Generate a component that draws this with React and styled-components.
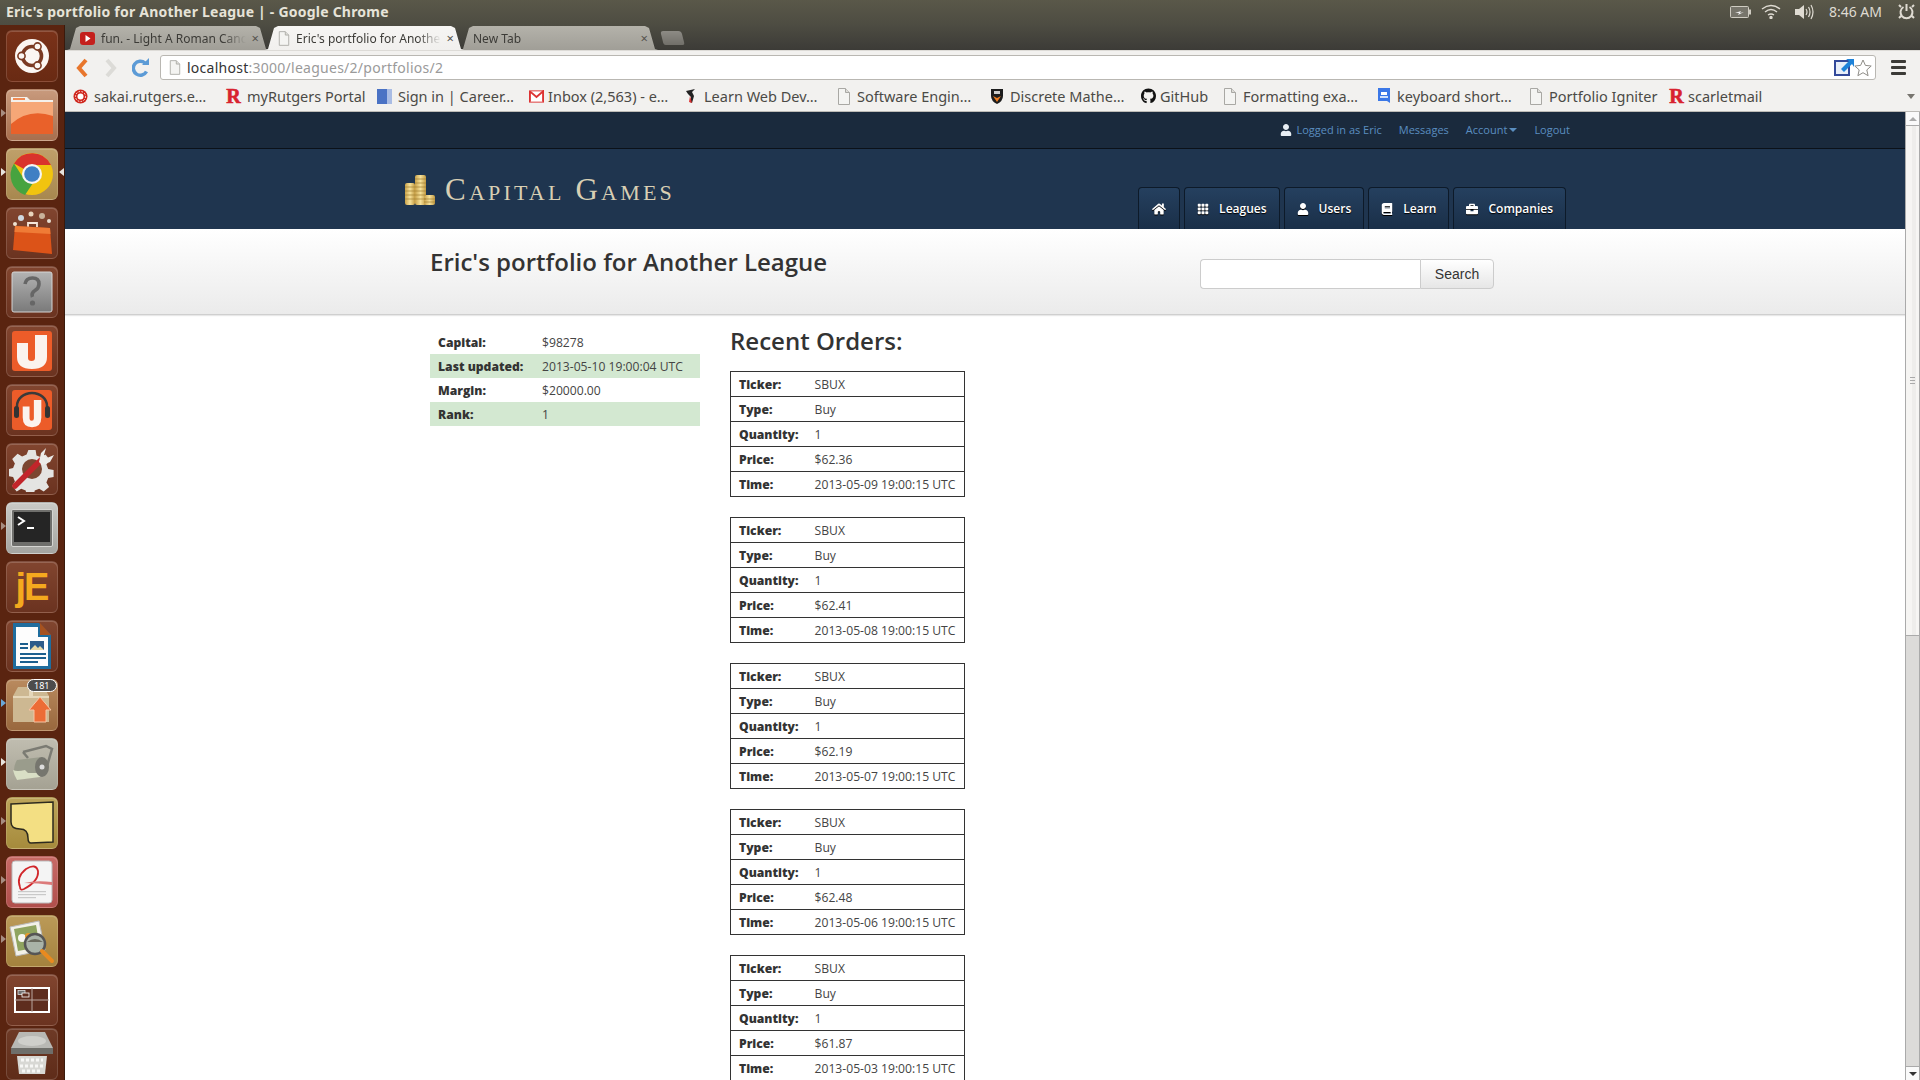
import styled, { createGlobalStyle } from "styled-components";
import { FaHome, FaUser, FaBook, FaBriefcase, FaGithub } from "react-icons/fa";
import { BsGrid3X3GapFill } from "react-icons/bs";

const Global = createGlobalStyle`
  html, body { margin: 0; padding: 0; height: 100%; overflow: hidden; background: #fff; }
  * { box-sizing: border-box; }
  body { font-family: "Open Sans", "Liberation Sans", sans-serif; color: #333; }
`;

const uiFont = `"Noto Sans", "Open Sans", sans-serif`;

const Screen = styled.div`
  width: 1920px;
  height: 1080px;
  display: flex;
  flex-direction: column;
  overflow: hidden;
  background: #3c3b37;
`;

const Panel = styled.div`
  height: 25px;
  flex: none;
  display: flex;
  align-items: center;
  justify-content: space-between;
  padding: 0 5px 2px 6px;
  background: linear-gradient(#5a5849, #4d4c42);
`;

const WindowTitle = styled.div`
  font: 700 14px ${uiFont};
  color: #e6e3d8;
  letter-spacing: 0.22px;
`;

const Tray = styled.div`
  display: flex;
  align-items: center;
  color: #dfdbd2;
`;

const TrayIcon = styled.svg`
  display: block;
  margin-right: ${(p) => p.$mr}px;
`;

const Clock = styled.span`
  font: 400 14px ${uiFont};
  color: #dfdbd2;
  margin-right: 16px;
`;

const Body = styled.div`
  flex: 1;
  display: flex;
  min-height: 0;
`;

const Launcher = styled.div`
  width: 65px;
  flex: none;
  display: flex;
  flex-direction: column;
  align-items: center;
  gap: 7px;
  padding: 5px 1px 0 0;
  background: #5a2410;
  border-right: 1px solid #3a1a0c;
  overflow: hidden;
`;

const Tile = styled.div`
  position: relative;
  width: 52px;
  height: 52px;
  flex: none;
  margin-top: ${(p) => (p.$fold ? "-5px" : 0)};
  border-radius: 6px;
  display: flex;
  align-items: center;
  justify-content: center;
  background: ${(p) => p.$bg || "linear-gradient(#81452f, #6b3320)"};
  border: 1px solid rgba(255, 255, 255, 0.14);
  box-shadow: inset 0 1px 0 rgba(255, 255, 255, 0.18);
`;

const Pip = styled.span`
  position: absolute;
  top: 19px;
  ${(p) => (p.$right ? "right: -7px" : "left: -6px")};
  width: 0;
  height: 0;
  border-top: 4px solid transparent;
  border-bottom: 4px solid transparent;
  ${(p) =>
    p.$right ? "border-right: 5px solid #e8e4de" : `border-left: 5px solid ${p.$color || "#e8e4de"}`};
  opacity: ${(p) => (p.$dim ? 0.55 : 1)};
`;

const CountBadge = styled.span`
  position: absolute;
  top: -1px;
  right: 0;
  height: 13px;
  padding: 0 6px;
  border-radius: 7px;
  background: #4c4c4c;
  border: 1px solid #fff;
  color: #fff;
  font: 400 9px/11px ${uiFont};
`;

const JEdit = styled.span`
  font: 700 38px/1 "Liberation Sans", sans-serif;
  letter-spacing: -2px;
  color: #f4a91e;
`;

const Browser = styled.div`
  flex: 1;
  min-width: 0;
  display: flex;
  flex-direction: column;
`;

const TabStrip = styled.div`
  height: 25px;
  flex: none;
  display: flex;
  align-items: flex-end;
  padding-left: 2px;
  background: linear-gradient(#4d4c42, #3c3b37);
`;

const Tab = styled.div`
  width: ${(p) => p.$w}px;
  height: 24px;
  margin-right: -4px;
  flex: none;
  display: flex;
  align-items: center;
  padding: 0 6px 0 ${(p) => p.$pl}px;
  gap: 6px;
  position: relative;
  z-index: ${(p) => (p.$active ? 2 : 1)};
  clip-path: polygon(0 100%, 3px 96%, 9px 8%, 13px 0, calc(100% - 13px) 0, calc(100% - 9px) 8%, calc(100% - 3px) 96%, 100% 100%);
  background: ${(p) => (p.$active ? "linear-gradient(#f6f5f3, #f1f0ee)" : "linear-gradient(#b4b2aa, #a09e97)")};
`;

const TabText = styled.span`
  flex: 1;
  min-width: 0;
  overflow: hidden;
  white-space: nowrap;
  font: 400 12px ${uiFont};
  color: #3c3b37;
  -webkit-mask-image: linear-gradient(to right, #000 84%, transparent 100%);
  mask-image: linear-gradient(to right, #000 84%, transparent 100%);
`;

const TabClose = styled.span`
  font: 400 13px/1 ${uiFont};
  color: #55534e;
  margin-right: 4px;
`;

const NewTab = styled.div`
  width: 21px;
  height: 14px;
  margin: 0 0 5px 8px;
  flex: none;
  border-radius: 3px 3px 2px 2px;
  transform: skewX(14deg);
  background: linear-gradient(#8d8b85, #716f69);
`;

const Toolbar = styled.div`
  height: 30px;
  flex: none;
  display: flex;
  align-items: flex-start;
  padding: 4px 0 0 0;
  background: #f2f1ef;
  border-top: 1px solid #dddbd7;
`;

const NavGlyphs = styled.div`
  width: 95px;
  height: 25px;
  flex: none;
  display: flex;
  align-items: center;
  gap: 15px;
  padding-left: 11px;
`;

const AddressBar = styled.div`
  width: 1716px;
  height: 25px;
  flex: none;
  display: flex;
  align-items: center;
  padding: 0 3px 0 8px;
  background: #fff;
  border: 1px solid #b9b7b2;
  border-radius: 3px;
`;

const Url = styled.div`
  flex: 1;
  margin-left: 6px;
  font: 400 14px/20px ${uiFont};
  color: #9a9a9a;
  letter-spacing: 0.26px;
`;

const Host = styled.span`
  color: #333;
`;

const MenuBars = styled.div`
  margin: 5px 0 0 15px;
  width: 15px;
  display: flex;
  flex-direction: column;
  gap: 3px;
`;

const MenuBar = styled.span`
  height: 3px;
  border-radius: 1px;
  background: #3c3b37;
`;

const Bookmarks = styled.div`
  height: 32px;
  flex: none;
  display: flex;
  align-items: center;
  padding: 1px 0 0 8px;
  background: #f2f1ef;
  border-bottom: 1px solid #bdbbb7;
  position: relative;
`;

const Bookmark = styled.div`
  width: ${(p) => p.$w}px;
  flex: none;
  display: flex;
  align-items: center;
  gap: ${(p) => p.$gap ?? 6}px;
  font: 400 14.5px ${uiFont};
  color: #4b4a46;
  white-space: nowrap;
`;

const BookmarkIcon = styled.span`
  width: 15px;
  height: 16px;
  flex: none;
  display: flex;
  align-items: center;
  justify-content: center;
  color: #111;
`;

const RutgersR = styled.span`
  font: 700 20px/16px "Liberation Serif", serif;
  color: #d8232f;
  -webkit-text-stroke: 0.6px #d8232f;
`;

const ChevronDown = styled.span`
  position: absolute;
  right: 5px;
  top: 14px;
  border-left: 4px solid transparent;
  border-right: 4px solid transparent;
  border-top: 5px solid #77756f;
`;

const Viewport = styled.div`
  flex: 1;
  min-height: 0;
  display: flex;
`;

const Page = styled.div`
  flex: 1;
  min-width: 0;
  overflow: hidden;
  background: #fff;
`;

const Container = styled.div`
  width: 1170px;
  margin: 0 auto;
`;

const TopBar = styled.div`
  height: 37px;
  background: #1a2a3d;
  border-bottom: 1px solid #0b1119;
`;

const TopLinks = styled(Container)`
  height: 35px;
  display: flex;
  align-items: center;
  justify-content: flex-end;
  gap: 17px;
  font-size: 11px;
  color: #5a8ec0;
`;

const TopLink = styled.span`
  display: flex;
  align-items: center;
  gap: ${(p) => p.$gap ?? 0}px;
`;

const UserIcon = styled(FaUser)`
  color: #e8eef4;
  font-size: 12px;
`;

const Caret = styled.span`
  margin-left: 2px;
  border-left: 4px solid transparent;
  border-right: 4px solid transparent;
  border-top: 4px solid #5a8ec0;
`;

const Header = styled.div`
  height: 80px;
  background: #1f354f;
`;

const HeaderRow = styled(Container)`
  height: 80px;
  display: flex;
  justify-content: space-between;
  align-items: flex-end;
  padding: 0 4px 0 4px;
`;

const Logo = styled.div`
  align-self: flex-start;
  margin-top: 23px;
  display: flex;
  align-items: center;
  gap: 9px;
`;

const LogoText = styled.span`
  font: 400 31px/36px "Liberation Serif", serif;
  font-variant: small-caps;
  letter-spacing: 3.2px;
  color: #d8cfb4;
`;

const MainNav = styled.div`
  display: flex;
  gap: 4px;
`;

const NavButton = styled.div`
  height: 42px;
  padding: 0 ${(p) => p.$px ?? 12}px;
  display: flex;
  align-items: center;
  gap: 10px;
  color: #fff;
  font-size: 12px;
  font-weight: 600;
  text-shadow: 0 1px 1px #000;
  background: linear-gradient(#25405f, #1a2f48);
  border: 1px solid #0d1a29;
  border-bottom: none;
  border-radius: 4px 4px 0 0;
  svg {
    font-size: ${(p) => p.$icon ?? 12}px;
    filter: drop-shadow(0 1px 0 #000);
  }
`;

const SubHeader = styled.div`
  height: 86px;
  background: linear-gradient(#fff, #ebebeb);
  border-bottom: 1px solid #cfcfcf;
  box-shadow: 0 1px 1px #e8e8e8;
`;

const SubRow = styled(Container)`
  height: 85px;
  display: flex;
  justify-content: space-between;
  padding: 0 76px 0 30px;
`;

const Title = styled.h1`
  margin: 15px 0 0;
  font-size: 24px;
  line-height: 36px;
  font-weight: 600;
  color: #333;
`;

const SearchForm = styled.div`
  margin-top: 30px;
  height: 30px;
  display: flex;
`;

const SearchInput = styled.div`
  width: 220px;
  background: #fff;
  border: 1px solid #ccc;
  border-right: none;
  border-radius: 4px 0 0 4px;
`;

const SearchButton = styled.div`
  width: 74px;
  display: flex;
  align-items: center;
  justify-content: center;
  font: 400 14px "Liberation Sans", sans-serif;
  color: #333;
  background: linear-gradient(#fff, #e6e6e6);
  border: 1px solid #ccc;
  border-radius: 0 4px 4px 0;
`;

const Content = styled(Container)`
  display: grid;
  grid-template-columns: 270px 235px;
  column-gap: 30px;
  padding: 15px 0 0 30px;
`;

const StatsTable = styled.table`
  width: 270px;
  align-self: start;
  border-collapse: collapse;
  font-size: 12.15px;
`;

const StatsRow = styled.tr`
  height: 24px;
  background: ${(p) => (p.$striped ? "#d3e8d1" : "#fff")};
`;

const Label = styled.td`
  padding: 0 8px;
  font-weight: 800;
  color: #333;
  white-space: nowrap;
  width: ${(p) => p.$w}px;
`;

const Value = styled.td`
  padding: 0 8px;
  color: #444;
  white-space: nowrap;
`;

const OrdersTitle = styled.h2`
  margin: -2px 0 17px;
  font-size: 24px;
  line-height: 26px;
  font-weight: 600;
  color: #333;
`;

const OrderTable = styled.table`
  width: 235px;
  border-collapse: collapse;
  border: 1px solid #333;
  font-size: 12.15px;
  margin-bottom: 20px;
`;

const OrderRow = styled.tr`
  height: 25px;
  border-top: 1px solid #333;
`;

const Scrollbar = styled.div`
  width: 15px;
  flex: none;
  display: flex;
  flex-direction: column;
  border-left: 1px solid #aaa;
  border-right: 1px solid #aaa;
  background: #dcdbd9;
`;

const ScrollButton = styled.div`
  height: 14px;
  flex: none;
  display: flex;
  align-items: center;
  justify-content: center;
  background: #fafafa;
  border: solid #aaa;
  border-width: ${(p) => (p.$down ? "1px 0 0" : "0 0 1px")};
  margin-top: ${(p) => (p.$down ? "auto" : 0)};
`;

const ScrollArrow = styled.span`
  border-left: 4px solid transparent;
  border-right: 4px solid transparent;
  ${(p) => (p.$down ? "border-top: 4px solid #333" : "border-bottom: 4px solid #aaa")};
`;

const ScrollThumb = styled.div`
  height: 510px;
  flex: none;
  display: flex;
  align-items: center;
  justify-content: center;
  background: linear-gradient(to right, #f6f5f3 0 50%, #eeedeb 50% 80%, #f6f5f3 80%);
  border-bottom: 1px solid #aaa;
`;

const Grip = styled.span`
  width: 5px;
  height: 7px;
  border-top: 1px solid #aaa;
  border-bottom: 1px solid #aaa;
  background: linear-gradient(#aaa, #aaa) center / 100% 1px no-repeat;
`;

const PageDoc = ({ size = 14 }) => (
  <svg width={size} height={size + 3} viewBox="0 0 14 17">
    <path d="M1.5.5h7l4 4v12h-11z" fill="#f4f4f2" stroke="#a9a8a4" />
    <path d="M8.5.5v4h4" fill="#dddcd8" stroke="#a9a8a4" />
  </svg>
);

const StarOutline = () => (
  <svg width="18" height="18" viewBox="0 0 18 18">
    <path d="M9 1l2.400 5.400 5.800.6-4.400 3.900 1.300 5.800L9 13.700l-5.100 3 1.300-5.800L.8 7l5.800-.6z" fill="#fff" stroke="#8f8d88" />
  </svg>
);

// launcher artwork, drawn roughly at 44px
const UbuntuIcon = () => (
  <svg width="36" height="36" viewBox="0 0 36 36">
    <circle cx="18" cy="18" r="17" fill="#fbf6f2" />
    <circle cx="18" cy="18" r="9.5" fill="none" stroke="#7b3a22" strokeWidth="3.6" />
    <circle cx="7.5" cy="18" r="3.6" fill="#fbf6f2" stroke="#7b3a22" strokeWidth="1.6" />
    <circle cx="23.5" cy="8.5" r="3.6" fill="#fbf6f2" stroke="#7b3a22" strokeWidth="1.6" />
    <circle cx="23.5" cy="27.5" r="3.6" fill="#fbf6f2" stroke="#7b3a22" strokeWidth="1.6" />
  </svg>
);

const FolderIcon = () => (
  <svg width="46" height="42" viewBox="0 0 46 42">
    <path d="M2 3h16l3 3h23v8H2z" fill="#f4f1ec" />
    <path d="M4 4h12v2H4z" fill="#f08a54" />
    <path d="M2 8h42v32H2z" fill="#e9612a" />
    <path d="M2 8h42v14Q20 14 2 30z" fill="#f6a777" />
  </svg>
);

const ChromeIcon = () => (
  <svg width="44" height="44" viewBox="0 0 44 44">
    <circle cx="22" cy="22" r="21" fill="#f1c40f" />
    <path d="M4 11.500A21 21 0 0 1 41 13L22 13A9 9 0 0 0 14 17z" fill="#d9332c" />
    <path d="M4 11.500L14 27A9 9 0 0 0 23 31L15 43A21 21 0 0 1 4 11.500z" fill="#46a33f" />
    <circle cx="22" cy="22" r="10" fill="#f5f5f5" />
    <circle cx="22" cy="22" r="7.800" fill="#3f7fc4" />
  </svg>
);

const BagIcon = () => (
  <svg width="46" height="46" viewBox="0 0 46 46">
    <circle cx="12" cy="8" r="3" fill="#cfd8e0" />
    <circle cx="22" cy="4" r="2.500" fill="#e8d5bd" />
    <circle cx="33" cy="6" r="3" fill="#c9b29a" />
    <circle cx="40" cy="11" r="2" fill="#e7e0d4" />
    <circle cx="6" cy="14" r="2" fill="#f0e3d0" />
    <path d="M19 17v-4h9v4" fill="none" stroke="#f5e7da" strokeWidth="1.800" />
    <path d="M6 16L41 18L43 44L4 40z" fill="#dc5318" />
    <path d="M6 16L41 18L41.500 24L5.500 22z" fill="#ef7b36" />
  </svg>
);

const HelpIcon = () => (
  <svg width="42" height="42" viewBox="0 0 42 42">
    <defs>
      <linearGradient id="help" x1="0" y1="0" x2="0" y2="1">
        <stop offset="0" stopColor="#b3b3b3" />
        <stop offset="1" stopColor="#7a7a7a" />
      </linearGradient>
    </defs>
    <rect x="1" y="1" width="40" height="40" rx="2" fill="url(#help)" stroke="#d5d5d5" />
    <path d="M14 13q1-6 7.500-6T28 13q0 4-4 6.500T21.500 26" fill="none" stroke="#666" strokeWidth="3.600" />
    <circle cx="21.500" cy="32" r="2.600" fill="#666" />
  </svg>
);

const OneIcon = ({ phones }) => (
  <svg width="42" height="42" viewBox="0 0 42 42">
    <rect x="1" y="1" width="40" height="40" rx="3" fill="#ec5c29" />
    {phones && (
      <>
        <path d="M6 24V17a15 13 0 0 1 30 0v7" fill="none" stroke="#3a3a3a" strokeWidth="2.500" />
        <rect x="3" y="17" width="5" height="12" rx="2.500" fill="#333" />
        <rect x="34" y="17" width="5" height="12" rx="2.500" fill="#333" />
      </>
    )}
    <path
      d="M6 13h11v15q0 3 3.500 3t3.500-3V5h12v22q0 12-15 12T6 27z"
      fill="#fbf3ee"
      transform={phones ? "translate(8 7) scale(.62 .8)" : undefined}
    />
  </svg>
);

const GearIcon = () => (
  <svg width="46" height="46" viewBox="0 0 46 46">
    <path
      d="M19 2h8l1 6 5 2 5-3 5 6-4 5 2 5 6 1v8l-6 1-2 5 3 5-6 5-5-3-5 2-1 5h-8l-1-5-5-2-5 3-5-6 3-5-2-5-5-1v-8l5-1 2-5-3-5 6-6 5 3 5-2z"
      fill="#e4e4e2"
      transform="translate(2.300 2.300) scale(.9)"
    />
    <circle cx="23" cy="23" r="10" fill="#7c4630" />
    <path d="M6 40L32 14" stroke="#c2252a" strokeWidth="5.500" strokeLinecap="round" />
    <path d="M30 16l2-9 5-5-2 7 3 3 7-3-4 7-8 3z" fill="#ecece9" />
  </svg>
);

const TerminalIcon = () => (
  <svg width="44" height="38" viewBox="0 0 42 38">
    <rect x="0.500" y="0.500" width="41" height="37" rx="1.500" fill="#6f6f6c" stroke="#d5d5d2" />
    <rect x="3" y="3" width="36" height="30" fill="#252525" />
    <path d="M7 8l6 4-6 4" fill="none" stroke="#fff" strokeWidth="2" />
    <path d="M16 19h7" stroke="#fff" strokeWidth="2" />
  </svg>
);

const WriterIcon = () => (
  <svg width="40" height="48" viewBox="0 0 40 48">
    <path d="M1 1h26l12 12v34H1z" fill="#1f6d9e" />
    <path d="M28 1l11 12H28z" fill="#a6521f" />
    <path d="M4 5h22v10h10v29H4z" fill="#fdfdfd" />
    <rect x="18" y="19" width="14" height="9" fill="#2d5c8a" />
    <path d="M18 28l5-5 3 3 2-2 4 4z" fill="#e8d9a7" />
    <g fill="#1c5f8e">
      <rect x="8" y="21" width="8" height="2" />
      <rect x="8" y="25" width="8" height="2" />
      <rect x="8" y="31" width="26" height="2" />
      <rect x="8" y="35" width="26" height="2" />
      <rect x="8" y="39" width="18" height="2" />
    </g>
  </svg>
);

const PackageIcon = () => (
  <svg width="46" height="42" viewBox="0 0 46 42">
    <path d="M4 12l5-9h26l5 9v26H4z" fill="#cdb892" />
    <path d="M4 12h36v2H4z" fill="#e5d7ba" />
    <rect x="20" y="3" width="4" height="10" fill="#e5d7ba" />
    <path d="M25 38V26h-5l11-13 11 13h-5v12z" fill="#ec6c36" stroke="#f7c4a4" />
  </svg>
);

const RollerIcon = () => (
  <svg width="46" height="44" viewBox="0 0 46 44">
    <path d="M14 10L37 4l6 3-7 24" fill="none" stroke="#7b7b73" strokeWidth="2.500" />
    <path d="M19 16L14 10" stroke="#7b7b73" strokeWidth="2.500" />
    <path d="M8 18L33 15v19L8 38q-6-10 0-20z" fill="#9a9c8c" />
    <path d="M4 28q4 2 12 0l3 3h12v4L8 38q-3-5-4-10z" fill="#d9dfc5" />
    <ellipse cx="33" cy="25" rx="7" ry="10" fill="#76766e" />
    <circle cx="33" cy="25" r="2.500" fill="#ddd" />
  </svg>
);

const NoteIcon = () => (
  <svg width="46" height="44" viewBox="0 0 46 44">
    <path d="M2 3l42-2v40l-22 1q-3 0-3-5 0-9-8-9-9 0-9-7z" fill="#f3df83" stroke="#2d2a1e" strokeWidth="1.500" />
  </svg>
);

const EvinceIcon = () => (
  <svg width="42" height="44" viewBox="0 0 42 44">
    <rect x="1" y="1" width="40" height="42" rx="3" fill="#f4f4f4" stroke="#bbb" />
    <path d="M9 27q-4-10 6-18 10-6 12 2 1 10-14 18-4 2-4-2" fill="none" stroke="#d1262a" strokeWidth="1.800" />
    <path d="M13 23q12-3 28-1v3q-14-2-28-2z" fill="#dc7a7a" />
    <g fill="#c9c9c9">
      <rect x="7" y="31" width="28" height="1.200" />
      <rect x="7" y="34" width="28" height="1.200" />
      <rect x="7" y="37" width="18" height="1.200" />
    </g>
  </svg>
);

const ViewerIcon = () => (
  <svg width="48" height="46" viewBox="0 0 48 46">
    <path d="M2 9l29-6 6 29-29 6z" fill="#f2f1e8" stroke="#bbb" />
    <path d="M6 11l22-4 4 22-22 4z" fill="#8fa45f" />
    <circle cx="14" cy="20" r="4" fill="#f7f7f0" />
    <circle cx="20" cy="18" r="3" fill="#e89a2c" />
    <circle cx="27" cy="26" r="10" fill="#a9b3a8" stroke="#555" strokeWidth="2.500" />
    <path d="M19 24q8-6 16 0" fill="#6a6b5f" />
    <path d="M34 33l10 10" stroke="#e98a1f" strokeWidth="4" strokeLinecap="round" />
  </svg>
);

const WorkspacesIcon = () => (
  <svg width="36" height="26" viewBox="0 0 36 26">
    <rect x="1" y="1" width="34" height="24" fill="#5e2d1e" stroke="#fff" strokeWidth="2" />
    <path d="M18 1v24M1 13h34" stroke="#b9a79f" strokeWidth="1" />
    <rect x="4" y="3.500" width="7" height="4" fill="#6f6f6f" stroke="#ddd" strokeWidth="0.800" />
    <rect x="8" y="6" width="7" height="4" fill="#5e2d1e" stroke="#fff" strokeWidth="0.800" />
  </svg>
);

const TrashIcon = () => (
  <svg width="50" height="50" viewBox="0 0 50 50">
    <path d="M12 3h26l8 16H4z" fill="#b8b8b4" />
    <ellipse cx="25" cy="12" rx="14" ry="5" fill="#cfcfcb" />
    <path d="M4 19h42v6H4z" fill="#6e6e6a" />
    <path d="M10 27h30l-2 18H12z" fill="#d8d8d4" />
    <path d="M14 31h22M13 37h24M15 42h20" stroke="#f7f7f5" strokeWidth="3" strokeDasharray="3 2" />
  </svg>
);

const launcherItems = [
  { key: "ubuntu", icon: <UbuntuIcon />, bg: "linear-gradient(#7a3219, #692a13)" },
  { key: "files", icon: <FolderIcon />, bg: "linear-gradient(#c89a7d, #a86f4e)", pip: "hollow" },
  { key: "chrome", icon: <ChromeIcon />, bg: "linear-gradient(#bfa06a, #a8884f)", pip: "both" },
  { key: "store", icon: <BagIcon /> },
  { key: "help", icon: <HelpIcon /> },
  { key: "one", icon: <OneIcon /> },
  { key: "music", icon: <OneIcon phones /> },
  { key: "settings", icon: <GearIcon /> },
  { key: "terminal", icon: <TerminalIcon />, bg: "linear-gradient(#c9c9c5, #a5a5a1)", pip: "hollow" },
  { key: "jedit", icon: <JEdit>jE</JEdit> },
  { key: "writer", icon: <WriterIcon /> },
  { key: "updates", icon: <PackageIcon />, bg: "linear-gradient(#b98a5e, #99683e)", pip: "blue", badge: "181" },
  { key: "roller", icon: <RollerIcon />, bg: "linear-gradient(#c0bdb0, #a5a293)", pip: "solid" },
  { key: "notes", icon: <NoteIcon />, bg: "linear-gradient(#bda55a, #a68b3c)", pip: "hollow" },
  { key: "evince", icon: <EvinceIcon />, bg: "linear-gradient(#c86a66, #b04f4c)", pip: "hollow" },
  { key: "viewer", icon: <ViewerIcon />, bg: "linear-gradient(#bb9a58, #a4823e)", pip: "hollow" },
  { key: "workspaces", icon: <WorkspacesIcon /> },
  { key: "trash", icon: <TrashIcon />, bg: "linear-gradient(#6e3a26, #5f2c19)", fold: true },
];

const bookmarks = [
  {
    w: 153,
    text: "sakai.rutgers.e…",
    icon: (
      <svg width="15" height="15" viewBox="0 0 15 15">
        <circle cx="7.500" cy="7.500" r="7" fill="#d0271d" />
        <circle cx="7.500" cy="7.500" r="3" fill="#fff" />
        <circle cx="7.500" cy="7.500" r="5" fill="none" stroke="#fff" strokeWidth="1" strokeDasharray="1.500 1.500" />
      </svg>
    ),
  },
  { w: 151, text: "myRutgers Portal", icon: <RutgersR>R</RutgersR> },
  {
    w: 152,
    text: "Sign in | Career…",
    icon: (
      <svg width="15" height="15" viewBox="0 0 15 15">
        <rect width="15" height="15" fill="#4a72c4" />
        <rect x="10" width="5" height="15" fill="#a9bce4" />
      </svg>
    ),
  },
  {
    w: 154,
    gap: 4,
    text: "Inbox (2,563) - e…",
    icon: (
      <svg width="16" height="13" viewBox="0 0 16 13">
        <rect x="0.500" y="0.500" width="15" height="12" fill="#fff" stroke="#d33" />
        <path d="M1 1l7 6 7-6v11M1 1v11" fill="none" stroke="#d33" strokeWidth="2" />
      </svg>
    ),
  },
  {
    w: 153,
    text: "Learn Web Dev…",
    icon: (
      <svg width="15" height="16" viewBox="0 0 15 16">
        <path d="M3 3l9-2-3 3 2 4-2 7-2-1 1-5-3-3z" fill="#222" />
        <path d="M7 8l2 7-3-1z" fill="#d33" />
      </svg>
    ),
  },
  { w: 153, text: "Software Engin…", icon: <PageDoc /> },
  {
    w: 152,
    text: "Discrete Mathe…",
    icon: (
      <svg width="14" height="16" viewBox="0 0 14 16">
        <path d="M1 1h12v7q0 5-6 8-6-3-6-8z" fill="#1d1d1d" />
        <path d="M3 8l4 2 4-2-4 6z" fill="#ef7d22" />
        <rect x="4" y="3" width="6" height="3" fill="#ccc" />
      </svg>
    ),
  },
  { w: 81, gap: 4, text: "GitHub", icon: <FaGithub size={16} /> },
  { w: 154, text: "Formatting exa…", icon: <PageDoc /> },
  {
    w: 152,
    text: "keyboard short…",
    icon: (
      <svg width="14" height="16" viewBox="0 0 14 16">
        <path d="M1 0h12v15l-3-2H1z" fill="#3b78e7" />
        <rect x="4" y="4" width="6" height="3" fill="#fff" />
        <rect x="3" y="8" width="8" height="2" fill="#cfe0fb" />
      </svg>
    ),
  },
  { w: 141, text: "Portfolio Igniter", icon: <PageDoc /> },
  { w: 130, gap: 4, text: "scarletmail", icon: <RutgersR>R</RutgersR> },
];

const orders = [
  { price: "$62.36", time: "2013-05-09 19:00:15 UTC" },
  { price: "$62.41", time: "2013-05-08 19:00:15 UTC" },
  { price: "$62.19", time: "2013-05-07 19:00:15 UTC" },
  { price: "$62.48", time: "2013-05-06 19:00:15 UTC" },
  { price: "$61.87", time: "2013-05-03 19:00:15 UTC" },
];

const stats = [
  ["Capital:", "$98278"],
  ["Last updated:", "2013-05-10 19:00:04 UTC"],
  ["Margin:", "$20000.00"],
  ["Rank:", "1"],
];

const CoinStack = () => (
  <svg width="32" height="32" viewBox="0 0 32 32">
    <defs>
      <linearGradient id="coin" x1="0" y1="0" x2="1" y2="0">
        <stop offset="0" stopColor="#c9a24a" />
        <stop offset="0.5" stopColor="#f6e19a" />
        <stop offset="1" stopColor="#c29a42" />
      </linearGradient>
    </defs>
    <rect x="1" y="9" width="10" height="22" rx="2" fill="url(#coin)" />
    <rect x="11" y="1" width="11" height="30" rx="2" fill="url(#coin)" />
    <rect x="20" y="21" width="11" height="10" rx="2" fill="url(#coin)" />
    <path d="M1 13h10M1 17h10M1 21h10M1 25h10M11 5h11M11 9h11M11 13h11M11 17h11M11 21h11M11 25h11M20 25h11M20 28h11" stroke="#a07f30" strokeWidth="0.700" />
  </svg>
);

export default function App() {
  return (
    <Screen>
      <Global />
      <Panel>
        <WindowTitle>Eric's portfolio for Another League | - Google Chrome</WindowTitle>
        <Tray>
          <TrayIcon $mr={10} width="21" height="12" viewBox="0 0 21 12">
            <rect x="0.500" y="0.500" width="18" height="11" rx="1" fill="#77756b" stroke="#cfccc2" />
            <rect x="19" y="3.500" width="2" height="5" fill="#cfccc2" />
            <path d="M5 7l6-2-1 2 4-1-6 3 1-2z" fill="#eee" />
          </TrayIcon>
          <TrayIcon $mr={13} width="20" height="15" viewBox="0 0 20 15" fill="none" stroke="#dfdbd2" strokeWidth="1.400">
            <path d="M1 5q9-7 18 0M4 8q6-5 12 0M7 11q3-2 6 0" />
            <circle cx="10" cy="13.500" r="1" fill="#dfdbd2" />
          </TrayIcon>
          <TrayIcon $mr={15} width="20" height="16" viewBox="0 0 20 16">
            <path d="M1 5h4l5-4v14l-5-4H1z" fill="#dfdbd2" />
            <path d="M12 5q2 3 0 6M14.500 3q3 5 0 10M17 1q4 7 0 14" fill="none" stroke="#dfdbd2" strokeWidth="1.200" />
          </TrayIcon>
          <Clock>8:46 AM</Clock>
          <TrayIcon $mr={0} width="17" height="17" viewBox="0 0 17 17" fill="none" stroke="#dfdbd2" strokeWidth="2">
            <path d="M5.500 4a6 6 0 1 0 6 0M8.500 1v7M1 2l2 2M16 2l-2 2M1 15l2-2M16 15l-2-2" />
          </TrayIcon>
        </Tray>
      </Panel>
      <Body>
        <Launcher>
          {launcherItems.map((item) => (
            <Tile key={item.key} $bg={item.bg} $fold={item.fold}>
              {item.icon}
              {item.pip === "hollow" && <Pip $dim />}
              {item.pip === "solid" && <Pip />}
              {item.pip === "blue" && <Pip $color="#6aa7d8" />}
              {item.pip === "both" && (
                <>
                  <Pip />
                  <Pip $right />
                </>
              )}
              {item.badge && <CountBadge>{item.badge}</CountBadge>}
            </Tile>
          ))}
        </Launcher>
        <Browser>
          <TabStrip>
            <Tab $w={202} $pl={13}>
              <svg width="15" height="13" viewBox="0 0 15 13">
                <rect width="15" height="13" rx="3" fill="#c4201d" />
                <path d="M5.500 3l5 3.500-5 3.500z" fill="#fff" />
              </svg>
              <TabText>fun. - Light A Roman Canc</TabText>
              <TabClose>×</TabClose>
            </Tab>
            <Tab $w={199} $pl={13} $active>
              <PageDoc size={12} />
              <TabText>Eric's portfolio for Anothe</TabText>
              <TabClose>×</TabClose>
            </Tab>
            <Tab $w={198} $pl={13}>
              <TabText>New Tab</TabText>
              <TabClose>×</TabClose>
            </Tab>
            <NewTab />
          </TabStrip>
          <Toolbar>
            <NavGlyphs>
              <svg width="13" height="20" viewBox="0 0 13 20">
                <path d="M10 2L3 10l7 8" fill="none" stroke="#e8762c" strokeWidth="4" />
              </svg>
              <svg width="13" height="20" viewBox="0 0 13 20">
                <path d="M3 2l7 8-7 8" fill="none" stroke="#dcdbd7" strokeWidth="4" />
              </svg>
              <svg width="18" height="20" viewBox="0 0 18 20">
                <path d="M14.500 13.500A7 7 0 1 1 13 5" fill="none" stroke="#5c9bd6" strokeWidth="3.500" />
                <path d="M10 7h7V0z" fill="#5c9bd6" />
              </svg>
            </NavGlyphs>
            <AddressBar>
              <PageDoc size={12} />
              <Url>
                <Host>localhost</Host>:3000/leagues/2/portfolios/2
              </Url>
              <svg width="20" height="20" viewBox="0 2 20 20">
                <rect x="1" y="5" width="14" height="14" fill="#e8eef8" stroke="#33499a" strokeWidth="2" />
                <path d="M7 13L15 5l-3-2h8v8l-2-3-8 8z" fill="#1e82d8" />
              </svg>
              <StarOutline />
            </AddressBar>
            <MenuBars>
              <MenuBar />
              <MenuBar />
              <MenuBar />
            </MenuBars>
          </Toolbar>
          <Bookmarks>
            {bookmarks.map((b) => (
              <Bookmark key={b.text} $w={b.w} $gap={b.gap}>
                <BookmarkIcon>{b.icon}</BookmarkIcon>
                {b.text}
              </Bookmark>
            ))}
            <ChevronDown />
          </Bookmarks>
          <Viewport>
            <Page>
              <TopBar>
                <TopLinks>
                  <TopLink $gap={4}>
                    <UserIcon />
                    Logged in as Eric
                  </TopLink>
                  <TopLink>Messages</TopLink>
                  <TopLink>
                    Account
                    <Caret />
                  </TopLink>
                  <TopLink>Logout</TopLink>
                </TopLinks>
              </TopBar>
              <Header>
                <HeaderRow>
                  <Logo>
                    <CoinStack />
                    <LogoText>Capital Games</LogoText>
                  </Logo>
                  <MainNav>
                    <NavButton $icon={14} $px={13}>
                      <FaHome />
                    </NavButton>
                    <NavButton>
                      <BsGrid3X3GapFill />
                      Leagues
                    </NavButton>
                    <NavButton>
                      <FaUser />
                      Users
                    </NavButton>
                    <NavButton>
                      <FaBook />
                      Learn
                    </NavButton>
                    <NavButton>
                      <FaBriefcase />
                      Companies
                    </NavButton>
                  </MainNav>
                </HeaderRow>
              </Header>
              <SubHeader>
                <SubRow>
                  <Title>Eric's portfolio for Another League</Title>
                  <SearchForm>
                    <SearchInput />
                    <SearchButton>Search</SearchButton>
                  </SearchForm>
                </SubRow>
              </SubHeader>
              <Content>
                <StatsTable>
                  <tbody>
                    {stats.map(([label, value], i) => (
                      <StatsRow key={label} $striped={i % 2 === 1}>
                        <Label $w={104}>{label}</Label>
                        <Value>{value}</Value>
                      </StatsRow>
                    ))}
                  </tbody>
                </StatsTable>
                <div>
                  <OrdersTitle>Recent Orders:</OrdersTitle>
                  {orders.map((order) => (
                    <OrderTable key={order.time}>
                      <tbody>
                        <OrderRow>
                          <Label $w={75}>Ticker:</Label>
                          <Value>SBUX</Value>
                        </OrderRow>
                        <OrderRow>
                          <Label>Type:</Label>
                          <Value>Buy</Value>
                        </OrderRow>
                        <OrderRow>
                          <Label>Quantity:</Label>
                          <Value>1</Value>
                        </OrderRow>
                        <OrderRow>
                          <Label>Price:</Label>
                          <Value>{order.price}</Value>
                        </OrderRow>
                        <OrderRow>
                          <Label>Time:</Label>
                          <Value>{order.time}</Value>
                        </OrderRow>
                      </tbody>
                    </OrderTable>
                  ))}
                </div>
              </Content>
            </Page>
            <Scrollbar>
              <ScrollButton>
                <ScrollArrow />
              </ScrollButton>
              <ScrollThumb>
                <Grip />
              </ScrollThumb>
              <ScrollButton $down>
                <ScrollArrow $down />
              </ScrollButton>
            </Scrollbar>
          </Viewport>
        </Browser>
      </Body>
    </Screen>
  );
}
